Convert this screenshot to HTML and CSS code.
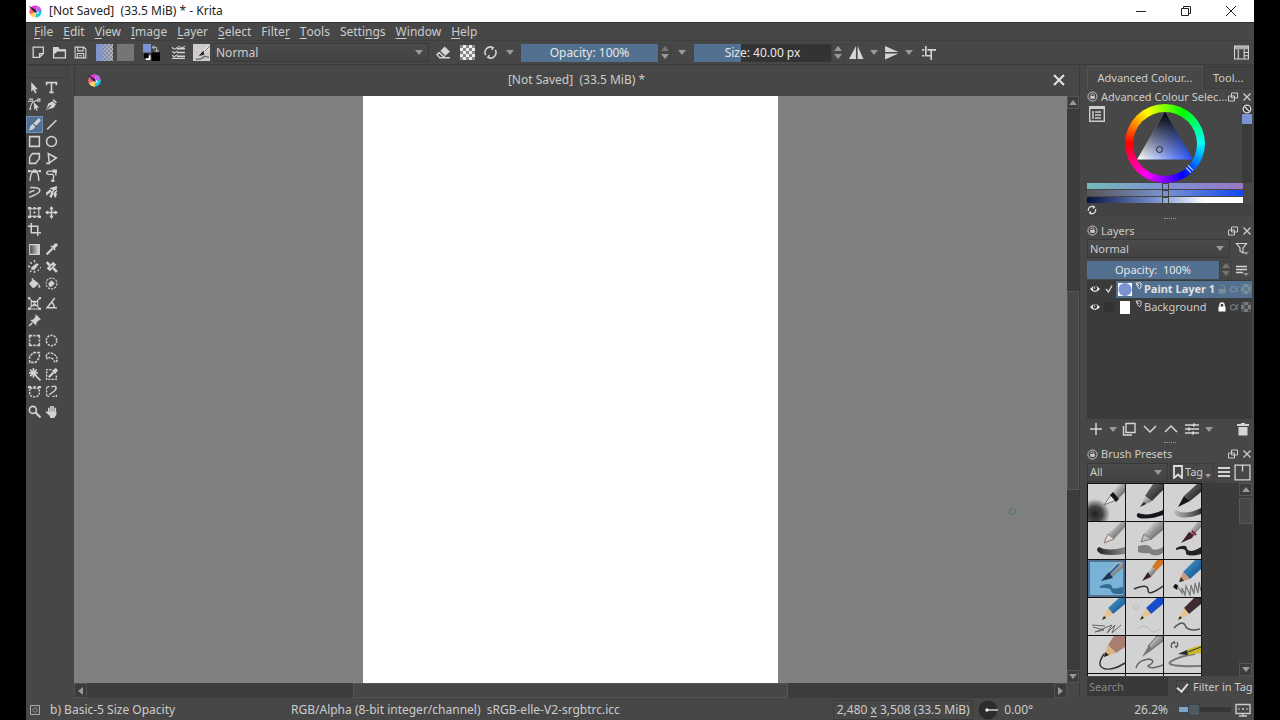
FILE: index.html
```html
<!DOCTYPE html>
<html lang="en">
<head>
<meta charset="utf-8">
<title>[Not Saved] (33.5 MiB) * - Krita</title>
<link rel="stylesheet" href="styles.css">
</head>
<body>
<svg class="defs" aria-hidden="true">
  <defs>
    <linearGradient id="steel" x1="0" y1="0" x2="1" y2="1"><stop offset="0" stop-color="#fff"/><stop offset=".5" stop-color="#999"/><stop offset="1" stop-color="#444"/></linearGradient>
    <linearGradient id="dark" x1="0" y1="0" x2="1" y2="1"><stop offset="0" stop-color="#777"/><stop offset="1" stop-color="#161616"/></linearGradient>
    <linearGradient id="blue" x1="0" y1="0" x2="1" y2="1"><stop offset="0" stop-color="#4aa0d8"/><stop offset="1" stop-color="#0c4a80"/></linearGradient>
    <linearGradient id="fade"><stop offset="0" stop-color="#222"/><stop offset="1" stop-color="#888"/></linearGradient>
    <linearGradient id="fadeout"><stop offset="0" stop-color="#bbb"/><stop offset="1" stop-color="#333"/></linearGradient>
    <linearGradient id="toolgrad"><stop offset="0" stop-color="#444"/><stop offset="1" stop-color="#ddd"/></linearGradient>
    <radialGradient id="puff"><stop offset="0" stop-color="#222"/><stop offset=".5" stop-color="#444"/><stop offset="1" stop-color="#444" stop-opacity="0"/></radialGradient>
  </defs>
  <symbol id="float" viewBox="0 0 10 10"><path d="M3.500 1h6v5h-6zM.5 4h6v5H.5z" fill="#474747" stroke="currentColor"/></symbol>
  <symbol id="close" viewBox="0 0 10 10"><path d="M1.500 1.500l7 7M8.500 1.500l-7 7" stroke="currentColor" stroke-width="1.300"/></symbol>
  <symbol id="lock-ring" viewBox="0 0 12 12"><circle cx="6" cy="6" r="5" fill="none" stroke="currentColor"/><path d="M3.500 5.500h5v3h-5z" fill="currentColor"/><path d="M4.300 5.500V4.700a1.700 1.700 0 0 1 3.400 0v.8" fill="none" stroke="currentColor"/></symbol>
  <symbol id="eye" viewBox="0 0 12 10"><path d="M1 5q5-6 10 0q-5 6-10 0z" fill="#eee"/><circle cx="6" cy="4.500" r="2.200" fill="#333"/><circle cx="5.500" cy="4" r=".8" fill="#eee"/></symbol>
  <symbol id="check" viewBox="0 0 10 10"><path d="M2 5l2.500 3L8 1.500" fill="none" stroke="currentColor" stroke-width="1.500"/></symbol>
  <symbol id="flag" viewBox="0 0 8 8"><path d="M1 1h5v4L4.500 7L2.500 4.500zM1 1l3 3" fill="none" stroke="currentColor"/></symbol>
  <symbol id="padlock" viewBox="0 0 10 10"><path d="M1.500 4.500h7v5h-7z" fill="currentColor"/><path d="M3 5V3a2 2 0 0 1 4 0v2" fill="none" stroke="currentColor" stroke-width="1.400"/></symbol>
  <symbol id="padlock-open" viewBox="0 0 10 10"><path d="M1.500 5h7v4.500h-7z" fill="currentColor"/><path d="M7.500 5V3a1.500 1.500 0 0 0-3-.5" fill="none" stroke="currentColor"/></symbol>
  <symbol id="alpha" viewBox="0 0 10 10"><path d="M9 2Q7 8 4 8Q1.500 8 1.500 5.500T4 2.500Q7 2.500 8.500 8" fill="none" stroke="currentColor" stroke-width="1.200"/></symbol>
  <symbol id="checker" viewBox="0 0 10 10"><path d="M0 0h10v10H0z" fill="currentColor" opacity=".35"/><path d="M0 3h3v4H0zM7 3h3v4H7zM3 0h4v3H3zM3 7h4v3H3z" fill="currentColor"/></symbol>
  <symbol id="logo" viewBox="0 0 14 14"><circle cx="7.500" cy="7.500" r="6" fill="#f4b8e8"/><path d="M2 5A6 6 0 0 1 9 1.700L8 7z" fill="#f52fd8"/><path d="M9 1.700A6 6 0 0 1 13.500 7L8 8z" fill="#bb65ef"/><path d="M13.500 7A6 6 0 0 1 8 13.500L8 7z" fill="#14cbe9"/><path d="M8 13.500A6 6 0 0 1 2 10L8 7z" fill="#ffd25c"/><path d="M2 10A6 6 0 0 1 2 5L8 8z" fill="#ff5b72"/><circle cx="9" cy="8.500" r="1.600" fill="#d8e4fa"/><path d="M.5 1.500l7.500 4.500l1 3l-3.500-1.500z" fill="#29243c"/></symbol>
</svg>

<div class="app">
  <header class="titlebar">
    <svg class="logo"><use href="#logo"/></svg>
    <h1 class="title">[Not Saved]&nbsp; (33.5 MiB) * - Krita</h1>
    <button class="win" aria-label="Minimise"><svg viewBox="0 0 12 12"><path d="M1 6.500h10" stroke="#222"/></svg></button>
    <button class="win" aria-label="Restore"><svg viewBox="0 0 12 12"><path d="M1.500 3.500h7v7h-7zM3.500 3V1.500h7v7H9" fill="none" stroke="#222"/></svg></button>
    <button class="win" aria-label="Close"><svg viewBox="0 0 12 12"><path d="M1 1l10 10M11 1L1 11" stroke="#222"/></svg></button>
  </header>

  <nav class="menubar">
    <button><u>F</u>ile</button><button><u>E</u>dit</button><button><u>V</u>iew</button><button><u>I</u>mage</button><button><u>L</u>ayer</button><button><u>S</u>elect</button><button>Filte<u>r</u></button><button><u>T</u>ools</button><button>Setti<u>n</u>gs</button><button><u>W</u>indow</button><button><u>H</u>elp</button>
  </nav>

  <div class="toolbar">
    <button class="tb" aria-label="New"><svg viewBox="0 0 14 14"><path d="M2 2h9.500v6L8 11.500H2zM11 8H8v3" fill="none" stroke="currentColor" stroke-width="1.200"/></svg></button>
    <button class="tb" aria-label="Open"><svg viewBox="0 0 14 14"><path d="M1.500 12V2.500h4l1 2h6V12z" fill="none" stroke="currentColor" stroke-width="1.200"/><path d="M1 2h5l1 2.500h6V6H5L3 8H1z" fill="currentColor"/></svg></button>
    <button class="tb" aria-label="Save"><svg viewBox="0 0 14 14"><path d="M2 2h8l2 2v8H2zM4.500 2v3.500h5V2M4 12V8h6v4M5.500 10h3" fill="none" stroke="currentColor"/></svg></button>
    <button class="tb space-3" aria-label="Gradient"><span class="swatch swatch-gradient"></span></button>
    <button class="tb" aria-label="Pattern"><span class="swatch swatch-pattern"></span></button>
    <button class="tb space-5" aria-label="Foreground and background colours"><svg class="large" viewBox="0 0 18 18"><path d="M9 9h9v9H9z" fill="#000"/><path d="M0 0h8.500v9H0z" fill="#7b93d2"/><path d="M3 12h5v5H3z" fill="#fff"/><path d="M1 10h5v5H1z" fill="#000"/><path d="M10 3.500h4.500V8M12 1.500L10 3.500L12 5.500M12.500 6.500l2 2l2-2" fill="none" stroke="#ccc"/></svg></button>
    <button class="tb space-6" aria-label="Edit brush settings"><svg viewBox="0 0 14 14"><path d="M5.500 3.500H13M5.500 7H13M5.500 10.500H13M1 12.500h12" stroke="currentColor" stroke-width="1.300"/><path d="M1 2q2 3 4 1q2-2 4-1q2 1 4-1M1 6l2 1.500L6 5.500M1 9.500l2 1.500L6 9" fill="none" stroke="currentColor"/></svg></button>
    <button class="tb space-2" aria-label="Choose brush preset"><svg class="large" viewBox="0 0 18 18"><path d="M0 0h18v18H0z" fill="#cfcbca"/><path d="M17 1L9 9l2 1l7-6z" fill="#efefef"/><path d="M18 2l-6 6" stroke="#555"/><path d="M11 7L6 13l6-2z" fill="#222"/><path d="M3 16q6 1 9-3l5 1" fill="none" stroke="#777" stroke-width="1.500"/></svg></button>
    <span class="combo blend"><select aria-label="Blending mode"><option>Normal</option></select></span>
    <button class="tb space-4" aria-label="Eraser"><svg viewBox="0 0 14 14"><path d="M8 1.500l5 4.500l-4 4L4 5.500z" fill="currentColor"/><path d="M3 7L1 9l2.500 3H13M3 7l4 4l1-1" fill="none" stroke="currentColor" stroke-width="1.400"/></svg></button>
    <button class="tb space-3" aria-label="Preserve alpha"><svg viewBox="0 0 15 15"><path d="M0 0h15v15H0z" fill="#888"/><path d="M0 3h3v3H0zM0 9h3v3H0zM3 0h3v3H3zM9 0h3v3H9zM3 6h3v3H3zM6 3h3v3H6zM9 6h3v3H9zM6 9h3v3H6zM3 12h3v3H3zM9 12h3v3H9zM12 3h3v3h-3zM12 9h3v3h-3z" fill="#eee"/></svg></button>
    <button class="tb space-2" aria-label="Reload preset"><svg viewBox="0 0 14 14"><path d="M2.500 9.500A5.200 5.200 0 0 1 9 2.200M11.500 4.500A5.200 5.200 0 0 1 5 11.800M6.500 12.500L4.500 11.500L6 9.500M7.500 1.500l2 1L8 4.500" fill="none" stroke="currentColor" stroke-width="1.400"/></svg></button>
    <button class="drop space-2" aria-label="More brush options"></button>
    <span class="spin space-5"><input class="fill-all" aria-label="Opacity" value="Opacity: 100%"><span class="steps"><i class="up dim"></i><i class="down"></i></span></span>
    <button class="drop space-4" aria-label="Show size slider"></button>
    <span class="spin space-6"><input class="fill-third" aria-label="Size" value="Size: 40.00 px"><span class="steps"><i class="up"></i><i class="down"></i></span></span>
    <button class="tb space-2" aria-label="Horizontal mirror"><svg viewBox="0 0 14 14"><path d="M6.500 1v12H0zM8 1l5.500 12H8z" fill="currentColor"/></svg></button>
    <button class="drop" aria-label="Horizontal mirror options"></button>
    <button class="tb space-1" aria-label="Vertical mirror"><svg viewBox="0 0 14 14"><path d="M1 6.500V1l12.500 5.500zM1 8v5.500L13.500 8z" fill="currentColor"/></svg></button>
    <button class="drop" aria-label="Vertical mirror options"></button>
    <button class="tb space-3" aria-label="Wrap around mode"><svg viewBox="0 0 14 14"><path d="M4.500 1v9H10M1 10h2M1 4.500h2M6 4.500h8M9.500 4.500V14" fill="none" stroke="currentColor" stroke-width="1.500"/></svg></button>
    <button class="tb push" aria-label="Choose workspace"><svg viewBox="0 0 14 14"><path d="M.5 1h13v12H.5zM4 4v9M9.500 4v9M9.500 7h4M9.500 10h4" fill="none" stroke="currentColor"/><path d="M0 1h14v3H0z" fill="currentColor" opacity=".7"/></svg></button>
  </div>

  <main class="workspace">
    <aside class="toolbox" aria-label="Toolbox">
      <div class="grip"></div>
      <div class="tools">
        <button aria-label="Select shapes"><svg viewBox="0 0 12 12"><path class="solid" d="M3 1v9l2-2l1.500 3.500l1.500-.7L6.500 7.500H9z"/></svg></button>
        <button aria-label="Text"><svg viewBox="0 0 12 12"><path d="M1.500 4V1.500h9V4M6 1.500v9M4 10.500h4" stroke-width="1.500"/></svg></button>
        <button aria-label="Edit shapes"><svg viewBox="0 0 12 12"><path d="M2 11Q2 3 9 2M0 3h4v-2H1M9 1h2v2H9zM1 10h2"/><path class="solid" d="M5.500 4v7L7 9.500L8 12l1-1l-1-2h2.500z"/></svg></button>
        <button aria-label="Calligraphy"><svg viewBox="0 0 12 12"><path class="solid" d="M1 11L3 5l4-2l3 3l-2 3zM8 1l3 3l-1 1l-3-3z"/><path class="hole" d="M2 10l3.500-3.500"/></svg></button>
      </div>
      <div class="tools">
        <button class="active" aria-label="Freehand brush"><svg viewBox="0 0 12 12"><path class="solid" d="M10 0l2 2l-4 5l-3-2zM4.500 5.500l2 2Q6 11 0 11.500Q2 10 2 7.500z"/></svg></button>
        <button aria-label="Line"><svg viewBox="0 0 12 12"><path d="M2 10.500L10.500 2" stroke-width="1.400"/></svg></button>
        <button aria-label="Rectangle"><svg viewBox="0 0 12 12"><path d="M1.500 1.500h9v9h-9z" stroke-width="1.400"/></svg></button>
        <button aria-label="Ellipse"><svg viewBox="0 0 12 12"><circle cx="6" cy="6" r="4.600" stroke-width="1.400"/></svg></button>
        <button aria-label="Polygon"><svg viewBox="0 0 12 12"><path d="M4 1.500h6.500V6L7 10.500H1.500V5z" stroke-width="1.400"/></svg></button>
        <button aria-label="Polyline"><svg viewBox="0 0 12 12"><path d="M1 10.500h3L3 1.500l7.500 4L4 10" stroke-width="1.400"/></svg></button>
        <button aria-label="Bezier curve"><svg viewBox="0 0 12 12"><path d="M1 2h10M2 11Q2 4 5 2h2q3 2 3 9" stroke-width="1.300"/><path class="solid" d="M4.500.5h3v3h-3zM0 1h2v2H0zM10 1h2v2h-2z"/></svg></button>
        <button aria-label="Freehand path"><svg viewBox="0 0 12 12"><path d="M8 2L3 2Q0 4 3 5h4q2 1 0 6M6 11h3M10 3v3" stroke-width="1.300"/><path class="solid" d="M7 .5h4v3H7zM6 10h2v2H6z"/></svg></button>
        <button aria-label="Dynamic brush"><svg viewBox="0 0 12 12"><path d="M2 1.500Q10 1 11 4Q11 7 1 10.500M1 6l5-2" stroke-width="1.400"/></svg></button>
        <button aria-label="Multibrush"><svg viewBox="0 0 12 12"><path d="M10 2L6 6M11 4L8 8" stroke-width="1.400"/><path class="solid" d="M4 2L11 0v3L8 4zM6 5l2 1l-2 5l-2-1zM1 6l4-3l1 2l-5 4zM9 5l2 2l-1 4l-2-2z"/></svg></button>
      </div>
      <div class="tools">
        <button aria-label="Transform"><svg viewBox="0 0 12 12"><path d="M2 2.500h8v7H2zM6 5v2M5 6h2"/><path class="solid" d="M0 1h3v2H0zM9 1h3v2H9zM0 9h3v2H0zM9 9h3v2H9zM5 1h2v2H5zM5 9h2v2H5z"/></svg></button>
        <button aria-label="Move"><svg viewBox="0 0 12 12"><path d="M6 1v10M1 6h10" stroke-width="1.400"/><path class="solid" d="M6 0l2 3H4zM6 12l2-3H4zM0 6l3-2v4zM12 6L9 4v4z"/></svg></button>
        <button aria-label="Crop"><svg viewBox="0 0 12 12"><path d="M3 0v9h9M0 3h9v9" stroke-width="1.400"/></svg></button>
      </div>
      <div class="tools">
        <button aria-label="Gradient"><svg viewBox="0 0 12 12"><path class="ramp" d="M1.500 1.500h9v9h-9z"/></svg></button>
        <button aria-label="Colour sampler"><svg viewBox="0 0 12 12"><path d="M1.500 10.500L7 5" stroke-width="2"/><path class="solid" d="M6 2l4 4l-1 1l-4-4zM7 3l2-2.500h2L12 2L9 5z"/></svg></button>
        <button aria-label="Colourize mask"><svg viewBox="0 0 12 12"><path class="solid" d="M8 3l2 1l-4 5H3V7z"/><path d="M6 0v2M2 2l1.500 1.500M0 6h2M11 7h1M2 11l1-1M6 10v2M9 9l1 1" stroke-width="1.300"/></svg></button>
        <button aria-label="Smart patch"><svg viewBox="0 0 12 12"><path d="M3 9l6-6" stroke-width="4"/><path d="M1.500 2l3 3M7.500 7.500l3.500 3.500" stroke-width="2.500"/><path class="hole" d="M5 7l2-2"/></svg></button>
        <button aria-label="Fill"><svg viewBox="0 0 12 12"><path class="solid" d="M1 6l4-4l5 4l-4 4H4zM10 6l1.500 3a1 1 0 0 1-2 0z"/><path d="M4 1v5"/></svg></button>
        <button aria-label="Enclose and fill"><svg viewBox="0 0 12 12"><circle cx="6" cy="6" r="5" stroke-dasharray="2 1"/><path class="solid" d="M3 6l3-3l3 3l-3 3H4z"/></svg></button>
      </div>
      <div class="tools">
        <button aria-label="Assistant"><svg viewBox="0 0 12 12"><path d="M1 1l10 10M11 1L1 11M1 11h10M3 4h6v4H3z"/><path class="solid" d="M0 0h2v2H0zM10 0h2v2h-2zM0 10h2v2H0zM10 10h2v2h-2z"/></svg></button>
        <button aria-label="Measure"><svg viewBox="0 0 12 12"><path d="M9 1L2 10h9M6 5q3 2 2 5" stroke-width="1.400"/></svg></button>
        <button aria-label="Reference images"><svg viewBox="0 0 12 12"><path class="solid" d="M7 0l5 5l-1.500.5l-2.500 2l-.5 3L2 5.500L5 5l2-3z"/><path d="M4 8l-3 3" stroke-width="1.400"/></svg></button>
      </div>
      <div class="tools">
        <button aria-label="Rectangular selection"><svg viewBox="0 0 12 12"><path d="M1.500 4V1.500H4M5 1.500h2M8 1.500h2.500V4M10.500 5v2M10.500 8v2.500H8M7 10.500H5M4 10.500H1.500V8M1.500 7V5" stroke-width="1.400"/></svg></button>
        <button aria-label="Elliptical selection"><svg viewBox="0 0 12 12"><circle cx="6" cy="6" r="4.800" stroke-width="1.400" stroke-dasharray="2 1"/></svg></button>
        <button aria-label="Polygonal selection"><svg viewBox="0 0 12 12"><path d="M5 1.500h5.500V6L7 10.500H1.500V5z" stroke-width="1.400" stroke-dasharray="2.500 1"/></svg></button>
        <button aria-label="Freehand selection"><svg viewBox="0 0 12 12"><path d="M1 5Q2 1 6 2Q12 4 11 9Q9 12 8 8Q5 5 2 7z" stroke-width="1.400" stroke-dasharray="2 1"/></svg></button>
        <button aria-label="Contiguous selection"><svg viewBox="0 0 12 12"><path d="M5 0v9M1 4.500h8M2 1.500l6 6M8 1.500l-6 6M6 6l5.500 5.500" stroke-width="1.500"/></svg></button>
        <button aria-label="Similar colour selection"><svg viewBox="0 0 12 12"><path d="M6 1.500H1.500v9h9V6" stroke-width="1.300" stroke-dasharray="2 1"/><path d="M3.500 8.500L8 4" stroke-width="2"/><path class="solid" d="M6.500 2.500l3 3L12 2L10 0z"/></svg></button>
        <button aria-label="Bezier selection"><svg viewBox="0 0 12 12"><path d="M2 3h8q2 8-4 8T2 3" stroke-width="1.300" stroke-dasharray="2 1"/><path class="solid" d="M0 1h3v2H0zM9 1h3v2H9zM5 1h2v2H5z"/></svg></button>
        <button aria-label="Magnetic selection"><svg viewBox="0 0 12 12"><path d="M4 1.500H1.500v9h3M7 10.500h3.500V8" stroke-width="1.300" stroke-dasharray="2 1"/><path d="M4 9l4-3q3-2 2-4t-4 0" stroke-width="1.300"/></svg></button>
      </div>
      <div class="tools">
        <button aria-label="Zoom"><svg viewBox="0 0 12 12"><circle cx="4.500" cy="4.500" r="3.200" stroke-width="1.500"/><path d="M7 7l4.500 4.500" stroke-width="2"/></svg></button>
        <button aria-label="Pan"><svg viewBox="0 0 12 12"><path d="M3.500 2.500V8M5.500 1v7M7.500 1v7M9.500 2.500V8M1 6l3 3" stroke-width="1.500"/><path class="solid" d="M3 6h7.500v3L8.500 12H5z"/></svg></button>
      </div>
    </aside>

    <section class="document">
      <header class="doc-title">
        <svg class="logo"><use href="#logo"/></svg>
        <h2>[Not Saved]&nbsp; (33.5 MiB) *</h2>
        <button aria-label="Close document"><svg viewBox="0 0 14 14"><path d="M2 2l10 10M12 2L2 12" stroke="#e4e4e4" stroke-width="2"/></svg></button>
      </header>
      <div class="view">
        <div class="canvas"><div class="sheet"></div><span class="brush-cursor"></span></div>
        <div class="vbar"><button aria-label="Scroll up"><i class="up"></i></button><span class="track"><span class="thumb"></span></span><button aria-label="Scroll down"><i class="down"></i></button></div>
        <div class="hbar"><button aria-label="Scroll left"><i class="left"></i></button><span class="track"><span class="thumb"></span></span><button aria-label="Scroll right"><i class="right"></i></button></div>
      </div>
    </section>

    <aside class="docks">
      <div class="tabs"><button class="selected">Advanced Colour...</button><button>Tool...</button></div>

      <section class="dock">
        <header class="dock-title"><svg class="ring"><use href="#lock-ring"/></svg><h3>Advanced Colour Selec...</h3><button aria-label="Float"><svg><use href="#float"/></svg></button><button aria-label="Close"><svg><use href="#close"/></svg></button></header>
        <div class="selector">
          <button class="config" aria-label="Selector settings"><svg viewBox="0 0 16 16"><path d="M.7 .7h14.600v14.600H.7z" fill="none" stroke="#ccc" stroke-width="1.400"/><path d="M1 2h14" stroke="#ccc" stroke-width="2"/><path d="M4 5v8M6 6h6M6 9h6M6 12h6" stroke="#ccc" stroke-width="1.500"/></svg></button>
          <div class="wheel"><div class="hub"><div class="triangle"></div></div><span class="pick"></span><span class="hue-mark"></span></div>
          <div class="history"><svg viewBox="0 0 10 10"><circle cx="5" cy="5" r="3.800" fill="none" stroke="#ddd" stroke-width="1.300"/><path d="M2.500 2.500l5 5" stroke="#ddd" stroke-width="1.300"/></svg><span></span></div>
        </div>
        <div class="shades"><span class="shade hue"></span><span class="shade saturation"></span><span class="shade value"></span></div>
        <div class="reload"><button aria-label="Reload colours"><svg viewBox="0 0 10 10"><path d="M1.500 6A3.600 3.600 0 0 1 7 2M8.500 4A3.600 3.600 0 0 1 3 8M5.500 .8L7.500 2L6 3.500M4.500 9.200L2.500 8L4 6.500" fill="none" stroke="#ddd" stroke-width="1.200"/></svg></button></div>
      </section>
      <div class="splitter"></div>

      <section class="dock grow-layers">
        <header class="dock-title"><svg class="ring"><use href="#lock-ring"/></svg><h3>Layers</h3><button aria-label="Float"><svg><use href="#float"/></svg></button><button aria-label="Close"><svg><use href="#close"/></svg></button></header>
        <div class="row"><span class="combo"><select aria-label="Layer blending mode"><option>Normal</option></select></span><button class="side" aria-label="Filter layers"><svg viewBox="0 0 14 14"><path d="M1.500 1.500h10L8 6v5L5 9V6z" fill="none" stroke="currentColor" stroke-width="1.200"/><path d="M8 10h6l-3 3z" fill="#999"/></svg></button></div>
        <div class="row"><span class="spin"><input class="fill-all" aria-label="Layer opacity" value="Opacity:  100%"><span class="steps"><i class="up dim"></i><i class="down dim"></i></span></span><button class="side" aria-label="Layer view options"><svg viewBox="0 0 14 14"><path d="M1 3.500h11M1 6.500h11M1 9.500h7" stroke="currentColor" stroke-width="1.500"/><path d="M8 10h6l-3 3z" fill="#999"/></svg></button></div>
        <ul class="layers">
          <li class="current"><svg class="eye"><use href="#eye"/></svg><span class="mark"><svg><use href="#check"/></svg></span><span class="body"><span class="thumbnail disc"></span><svg class="flag"><use href="#flag"/></svg><span class="name">Paint Layer 1</span><svg class="faint"><use href="#padlock-open"/></svg><svg class="faint"><use href="#alpha"/></svg><svg class="faint"><use href="#checker"/></svg></span></li>
          <li><svg class="eye"><use href="#eye"/></svg><span class="mark empty"></span><span class="body"><span class="thumbnail"></span><svg class="flag"><use href="#flag"/></svg><span class="name">Background</span><svg class="bright"><use href="#padlock"/></svg><svg class="faint"><use href="#alpha"/></svg><svg class="faint"><use href="#checker"/></svg></span></li>
        </ul>
        <div class="layer-actions">
          <button aria-label="Add layer"><svg viewBox="0 0 14 14"><path d="M7 1v12M1 7h12" stroke="currentColor" stroke-width="1.500"/></svg></button>
          <button class="drop" aria-label="Add layer options"></button>
          <button aria-label="Duplicate layer"><svg viewBox="0 0 14 14"><path d="M4 1.500h9v9H4z" fill="none" stroke="currentColor" stroke-width="1.400"/><path d="M1.500 4v9H10" fill="none" stroke="currentColor" stroke-width="1.400"/></svg></button>
          <button aria-label="Move layer down"><svg viewBox="0 0 14 14"><path d="M1 4l6 6l6-6" fill="none" stroke="currentColor" stroke-width="1.500"/></svg></button>
          <button aria-label="Move layer up"><svg viewBox="0 0 14 14"><path d="M1 10l6-6l6 6" fill="none" stroke="currentColor" stroke-width="1.500"/></svg></button>
          <button aria-label="Layer properties"><svg viewBox="0 0 14 14"><path d="M0 3h14M0 7h14M0 11h14" stroke="currentColor" stroke-width="1.300"/><path d="M8 1.500h2v3H8zM3 5.500h2v3H3zM7 9.500h2v3H7z" fill="currentColor"/></svg></button>
          <button class="drop" aria-label="Layer properties options"></button>
          <button class="push" aria-label="Delete layer"><svg viewBox="0 0 14 14"><path d="M1 2h4V1h4v1h4v2H1zM2.500 5h9v8.500h-9z" fill="currentColor"/></svg></button>
        </div>
      </section>
      <div class="splitter"></div>

      <section class="dock grow-presets">
        <header class="dock-title"><svg class="ring"><use href="#lock-ring"/></svg><h3>Brush Presets</h3><button aria-label="Float"><svg><use href="#float"/></svg></button><button aria-label="Close"><svg><use href="#close"/></svg></button></header>
        <div class="row"><span class="combo"><select aria-label="Tag filter"><option>All</option></select></span><button class="tag"><svg viewBox="0 0 10 14"><path d="M1 1h8v12L5 9.500L1 13z" fill="none" stroke="#ddd" stroke-width="1.800"/></svg>Tag<i class="down"></i></button><button class="side" aria-label="Display settings"><svg viewBox="0 0 14 14"><path d="M1 3h12M1 7h12M1 11h12" stroke="currentColor" stroke-width="2"/></svg></button><button class="side" aria-label="Storage resources"><svg class="large" viewBox="0 0 16 16"><path d="M1 1h14v14H1zM8 1v6" fill="none" stroke="currentColor" stroke-width="1.200"/></svg></button></div>
        <div class="preset-area">
          <div class="presets">
            <button aria-label="Airbrush Soft"><svg viewBox="0 0 37 37"><circle cx="7" cy="30" r="15" fill="url(#puff)"/><path d="M37 0h-6L24 10l5 6l8-8z" fill="url(#steel)"/><path d="M23 11L16 21l12-5z" fill="#e8e8e8" stroke="#777"/><path d="M25 8l6 7l-3 3l-6-7z" fill="#151515"/></svg></button>
            <button aria-label="Basic-1"><svg viewBox="0 0 37 37"><path d="M12 29q10 4 25-3v5q-14 5-24 3q-4-2-1-5z" fill="#15151b"/><path d="M37 0h-10L19 12l7 5L37 6z" fill="url(#dark)"/><path d="M19 12L14 23l12-6z" fill="url(#steel)"/><path d="M14 23l4-5l2 2z" fill="#222"/></svg></button>
            <button aria-label="Basic-2"><svg viewBox="0 0 37 37"><path d="M12 26q9 6 25-2v6q-16 6-24 2q-5-4-1-6z" fill="url(#fadeout)"/><path d="M33 0L20 12l6 5L37 8V0z" fill="url(#dark)"/><path d="M20 12L14 23l12-6z" fill="#161616"/></svg></button>
            <button aria-label="Basic-3"><svg viewBox="0 0 37 37"><path d="M11 25q9 5 26 0v7q-15 2-24 0q-7-4-2-7z" fill="url(#fade)"/><path d="M33 0L20 12l6 5L37 5V0z" fill="url(#steel)"/><path d="M20 12l-4 9l10-4z" fill="#e7dcd5" stroke="#877"/></svg></button>
            <button aria-label="Basic-4"><svg viewBox="0 0 37 37"><path d="M12 24q12-3 14 3q5 2 11-2v6q-8 5-14 0q-5 1-11-1z" fill="#808080"/><path d="M37 0h-9L18 12l7 6L37 8z" fill="url(#steel)"/><path d="M18 12l-3 8l10-3z" fill="#bbb" stroke="#777"/></svg></button>
            <button aria-label="Ink-1"><svg viewBox="0 0 37 37"><path d="M12 26q11-5 11 1q3 5 14-2v7q-11 3-15 0q1-7-10-4z" fill="#222"/><path d="M37 0h-4L23 13l3 4L37 5z" fill="url(#steel)"/><path d="M25 10L17 21l11-5l2-3z" fill="#402028"/><path d="M28 9l4 4" stroke="#802030" stroke-width="2"/></svg></button>
            <button class="chosen" aria-label="Basic-5 Size Opacity"><svg viewBox="0 0 37 37"><path d="M0 0h37v37H0z" fill="#78b2d7"/><path d="M12 26q9-4 12 0q-2 5 13 0v7q-14 3-14-3q-3-3-11-2z" fill="#326a92"/><path d="M36 2h-7L18 14l5 4L36 7z" fill="url(#steel)"/><path d="M31 4L20 15" stroke="#1d6dba" stroke-width="2"/><path d="M21 12l-8 9l12-3z" fill="#183654"/></svg></button>
            <button aria-label="Bristles-1"><svg viewBox="0 0 37 37"><path d="M8 29q14-6 14 1q0 7 15-4" fill="none" stroke="#333" stroke-width="1.500"/><path d="M37 0h-6L26 7l4 4L37 4z" fill="#d07626"/><path d="M26 7l-5 6l4 4l5-6z" fill="url(#steel)"/><path d="M22 12l-6 9l9-4z" fill="#3b2220"/></svg></button>
            <button aria-label="Pencil-1"><svg viewBox="0 0 37 37"><path d="M14 27l4 6l0-5l3 7l1-9l4 9l1-10l3 9l1-11l3 10l1-11l2 9" fill="none" stroke="#777" stroke-width="1.200"/><path d="M37 0H31L19 12l7 7L37 9z" fill="url(#blue)"/><path d="M19 12L15 22l11-3z" fill="#c79b7b"/><path d="M15 22l2-5l3 4z" fill="#333"/><path d="M11 24l3 1l-1 5l-4-3z" fill="#111"/></svg></button>
            <button aria-label="Pencil-2"><svg viewBox="0 0 37 37"><path d="M4 27l13 1M5 29l11 3l-9 2l17-7l-5 8l8-8l-3 8l9-8" fill="none" stroke="#666"/><path d="M37 0h-6L20 10l5 6L37 6z" fill="url(#blue)"/><path d="M20 10l-6 12l11-6z" fill="#e5c38e"/><path d="M14 22l2-4l2 2z" fill="#222"/></svg></button>
            <button aria-label="Pencil-3"><svg viewBox="0 0 37 37"><circle cx="10" cy="9" r="2.500" fill="none" stroke="#bbb"/><path d="M11 31q8-6 12 0t11 0" fill="none" stroke="#bbb"/><path d="M37 0h-6L20 10l5 6L37 6z" fill="#174dcc"/><path d="M20 10l-6 12l11-6z" fill="#e5c38e"/><path d="M14 22l2-4l2 2z" fill="#222"/></svg></button>
            <button aria-label="Pencil-4"><svg viewBox="0 0 37 37"><path d="M10 30q8-8 11-3q2 7 15 4" fill="none" stroke="#555" stroke-width="1.500"/><path d="M37 0h-7L20 10l5 6L37 6z" fill="#3e2b30"/><path d="M20 10l-6 12l11-6z" fill="#e5c38e"/><path d="M14 22l2-4l2 2z" fill="#222"/></svg></button>
            <button aria-label="Charcoal"><svg viewBox="0 0 37 37"><path d="M16 18q-9 13 2 15q8 1 19-6" fill="none" stroke="#333" stroke-width="1.500"/><path d="M37 0h-11L20 9l8 8L37 11z" fill="#a87e71"/><path d="M20 9l-4 12l12-4z" fill="#d9b183"/><path d="M16 21l1-5l4 3z" fill="#222"/></svg></button>
            <button aria-label="Ink-2"><svg viewBox="0 0 37 37"><path d="M10 32q2-8 13-9q8 2-1 7q3 4 15-1" fill="none" stroke="#666" stroke-width="1.500"/><path d="M37 0h-6L22 10l3 4L37 5z" fill="url(#steel)" stroke="#666"/><path d="M23 9l-7 12l10-7z" fill="#777"/></svg></button>
            <button aria-label="Sketch"><svg viewBox="0 0 37 37"><path d="M31 18Q15 20 6 26q-4 5 31 4" fill="none" stroke="#777" stroke-width="2"/><path d="M37 9L22 14l2 5l13-2z" fill="#c8b72a"/><path d="M37 11l-13 5" stroke="#333"/><path d="M23 14l-9 4l10 1z" fill="#272727"/><path d="M7 8l3-2M8 12q-2-3 1-5M10 5l1 3M13 6q2 3-1 5M13 12l-2-2" fill="none" stroke="#555" stroke-width="1.300"/></svg></button>
            <button aria-label="Marker-1"></button><button aria-label="Marker-2"></button><button aria-label="Marker-3"></button>
          </div>
          <div class="vbar"><button aria-label="Scroll up"><i class="up"></i></button><span class="track"><span class="thumb"></span></span><button aria-label="Scroll down"><i class="down"></i></button></div>
        </div>
        <div class="search-row"><input type="search" placeholder="Search" aria-label="Search presets"><label><input type="checkbox" checked><span>Filter in Tag</span></label></div>
      </section>
    </aside>
  </main>

  <footer class="status">
    <svg viewBox="0 0 10 10"><path d="M.5 .5h9v9h-9z" fill="none" stroke="#aaa"/><circle cx="5" cy="5" r="2.200" fill="none" stroke="#888"/></svg>
    <span class="preset-name">b) Basic-5 Size Opacity</span>
    <span class="profile">RGB/Alpha (8-bit integer/channel)&nbsp; sRGB-elle-V2-srgbtrc.icc</span>
    <button class="dimensions">2,480 <u>x</u> 3,508 (33.5 MiB)</button>
    <svg class="dial" viewBox="0 0 20 20"><circle cx="10" cy="10" r="9.500" fill="#2c2c2c"/><path d="M9 10h11" stroke="#eee" stroke-width="1.300"/><circle cx="9" cy="10" r="1.700" fill="#eee"/></svg>
    <span class="angle">0.00°</span>
    <label class="zoom"><span>26.2%</span><input type="range" min="0" max="100" value="23"></label>
    <button class="fit" aria-label="Fit to view"><svg viewBox="0 0 16 14"><path d="M1 1.500h14v9H1zM8 10.500V13M4 13h8" fill="none" stroke="currentColor" stroke-width="1.400"/><circle cx="8" cy="6" r="1" fill="currentColor"/><path d="M3 6h2M11 6h2" stroke="currentColor"/></svg></button>
  </footer>
</div>
</body>
</html>
```

FILE: styles.css
```css
* { box-sizing: border-box; }

body {
  margin: 0;
  background: #000;
  color: #ccc;
  font: 12px/16px "Noto Sans", "Open Sans", sans-serif;
}

button, input, select {
  margin: 0;
  padding: 0;
  border: 0;
  border-radius: 0;
  background: none;
  color: inherit;
  font: inherit;
}

button { display: flex; align-items: center; justify-content: center; }
h1, h2, h3 { margin: 0; font: inherit; }
u { text-underline-offset: 2px; }
svg { display: block; flex: none; width: 14px; height: 14px; }
.defs { position: absolute; width: 0; height: 0; }

.app {
  display: grid;
  grid-template-rows: 22px 18px 25px minmax(0, 1fr) 22px;
  height: 100vh;
  margin: 0 26px;
  background: #474747;
}

.up, .down, .left, .right { width: 0; height: 0; border: 4px solid transparent; }
.up { border-bottom: 5px solid #999; border-top: 0; }
.down { border-top: 5px solid #999; border-bottom: 0; }
.left { border-right: 5px solid #999; border-left: 0; }
.right { border-left: 5px solid #999; border-right: 0; }
.dim { opacity: .55; }

/* Title bar and menus */
.titlebar { display: flex; align-items: center; padding: 0 1px 0 2px; background: #fff; color: #222; }
.title { flex: 1; padding-left: 7px; }
.win { width: 45px; height: 22px; }
.win svg { width: 12px; height: 12px; }
.menubar { display: flex; align-items: center; gap: 10px; padding-left: 8px; border-top: 1px solid #333; }

/* Main toolbar */
.toolbar { display: flex; align-items: center; padding: 0 2px; border-top: 1px solid #404040; border-bottom: 1px solid #3a3a3a; }
.tb { width: 21px; height: 21px; flex: none; color: #d5d5d5; }
.tb svg { width: 15px; height: 15px; }
.tb .large, .large { width: 17px; height: 17px; }
.swatch { width: 17px; height: 17px; }
.swatch-gradient { background: linear-gradient(90deg, #7b93d2, #7b93d200), conic-gradient(#888 25%, #bbb 0 50%, #888 0 75%, #bbb 0) 0 0 / 4px 4px; }
.swatch-pattern { background: #757575; }
.space-1 { margin-left: 1px; }
.space-2 { margin-left: 2px; }
.space-3 { margin-left: 3px; }
.space-4 { margin-left: 4px; }
.space-5 { margin-left: 5px; }
.space-6 { margin-left: 6px; }
.push { margin-left: auto; }
.drop { width: 13px; height: 18px; }
.drop::after, .combo::after { content: ""; border: 4px solid transparent; border-top: 5px solid #999; border-bottom: 0; }

.combo { position: relative; display: flex; flex: 1; min-width: 0; height: 19px; border: 1px solid #393939; background: linear-gradient(#4b4b4b, #424242); }
.combo::after { position: absolute; right: 5px; top: 6px; pointer-events: none; }
.combo select { width: 100%; padding-left: 2px; appearance: none; }
.blend { flex: 0 1 216px; margin-left: 1px; }

.spin { display: flex; flex: 0 1 150px; min-width: 0; height: 18px; }
.spin input { flex: 1; width: 0; min-width: 0; text-align: center; color: #e6e6e6; white-space: pre; }
.steps { display: flex; flex: none; flex-direction: column; align-items: center; justify-content: center; gap: 3px; width: 13px; border: 1px solid #404040; }
.fill-all { background: #527191; }
.fill-third { background: linear-gradient(90deg, #527191 34%, #333 34%); }

/* Workspace */
.workspace { display: grid; grid-template-columns: 48px minmax(0, 1fr) 174px; min-height: 0; }
.toolbox { background: #474747; }
.grip { height: 13px; width: 42px; margin-bottom: 1px; border: 1px solid #3d3d3d; border-left: 0; }
.tools { display: grid; grid-template-columns: 17px 17px; grid-auto-rows: 17px; margin-bottom: 3px; color: #d2d2d2; }
.tools button { width: 17px; height: 17px; }
.tools svg { width: 13px; height: 13px; fill: none; stroke: currentColor; }
.tools .solid { fill: currentColor; stroke: none; }
.tools .hole { stroke: #474747; }
.tools .ramp { fill: url(#toolgrad); }
.tools .active { background: #527191; border: 1px solid #6f93b8; }

.document { display: grid; grid-template-rows: 31px minmax(0, 1fr); border-right: 1px solid #3a3a3a; min-height: 0; }
.doc-title { display: flex; align-items: center; padding: 0 13px 2px 12px; border-left: 1px solid #3a3a3a; }
.doc-title h2 { flex: 1; text-align: center; }
.logo { width: 14px; height: 14px; }
.view { display: grid; grid-template-columns: minmax(0, 1fr) 12px; grid-template-rows: minmax(0, 1fr) 15px; min-height: 0; }
.canvas { position: relative; display: grid; grid-template-columns: 289fr 415fr 289fr; background: #808080; }
.sheet { grid-column: 2; background: #fff; }
.brush-cursor { position: absolute; left: 94.2%; top: 70.2%; width: 7px; height: 7px; border: 1px solid #4b7a4b; border-radius: 50%; }

.vbar { display: flex; flex-direction: column; min-height: 0; background: #3c3c3c; }
.vbar button { width: 100%; height: 13px; flex: none; border: 1px solid #555; }
.vbar .track { display: grid; flex: 1; grid-template-rows: 182fr 199fr 180fr; }
.vbar .thumb { grid-row: 2; border: 1px solid #575757; background: #474747; }
.hbar { display: flex; background: #3c3c3c; }
.hbar button { width: 13px; flex: none; border: 1px solid #505050; }
.hbar .track { display: grid; flex: 1; grid-template-columns: 266fr 435fr 266fr; }
.hbar .thumb { grid-column: 2; border: 1px solid #555; background: #474747; }

/* Dockers */
.docks { display: flex; flex-direction: column; min-height: 0; padding: 1px 2px 1px 7px; font-size: 11px; }
.tabs { display: flex; flex: none; height: 23px; }
.tabs button { padding: 0 9px; border: 1px solid #3c3c3c; background: #424242; white-space: nowrap; flex: 1; }
.tabs .selected { flex: 0 0 116px; background: #474747; border-color: #555; border-bottom: 0; }
.dock-title { display: flex; align-items: center; height: 15px; flex: none; }
.dock-title h3 { flex: 1; padding-left: 3px; white-space: nowrap; }
.dock-title button, .dock-title button svg { width: 10px; height: 10px; }
.dock-title button + button { margin-left: 4px; }
.ring { width: 11px; height: 11px; }
.dock { display: flex; flex-direction: column; flex: none; min-height: 0; }
.grow-layers { flex: 217 1 0; }
.grow-presets { flex: 251 1 0; }
.splitter { flex: none; width: 12px; height: 5px; margin: 2px auto 0; border-top: 1px dotted #999; }

.selector { display: grid; grid-template-columns: 38px 1fr 10px; height: 79px; }
.config { width: 18px; height: 18px; margin: 1px; }
.config svg { width: 16px; height: 16px; }
.wheel { position: relative; display: grid; place-items: center; width: 80px; height: 79px; border-radius: 50%; background: conic-gradient(from 270deg, #f00, #ff0, #0f0, #0ff, #00f, #f0f, #f00); }
.hub { width: 64px; height: 64px; padding: 0 4px; border-radius: 50%; background: #474747; }
.triangle { height: 48px; background: linear-gradient(#000, #0000), linear-gradient(90deg, #fff 5%, #1f50ff); clip-path: polygon(50% 0, 100% 100%, 0 100%); }
.pick { position: absolute; left: 31px; top: 42px; width: 7px; height: 7px; border: 1px solid #222; border-radius: 50%; }
.hue-mark { position: absolute; left: 61px; top: 63px; width: 7px; height: 4px; border: solid #dde; border-width: 1px 0; transform: rotate(45deg); }
.history { background: #3b3b3b; }
.history svg { width: 10px; height: 10px; }
.history span { display: block; height: 10px; background: #7b93d2; }
.shades { display: grid; gap: 1px; width: 156px; }
.shade { height: 6px; }
.shade::after { content: ""; display: block; width: 5px; height: 6px; margin: 0 auto; border: 1px solid #444; }
.hue { background: linear-gradient(90deg, #76b9ba, #7b93d2 50%, #9a77c5); }
.saturation { background: linear-gradient(90deg, #555, #7b93d2 50%, #1148f0); }
.value { background: linear-gradient(90deg, #07133f, #7b93d2 45%, #fff 75%); }
.reload { height: 13px; padding: 2px 0 0; background: #424242; }
.reload button, .reload svg { width: 10px; height: 10px; }

.row { display: flex; align-items: center; height: 21px; flex: none; }
.row .combo { margin-right: 2px; }
.row .spin { flex: 1; }
.side { width: 20px; flex: none; color: #d5d5d5; }
.layers { display: flex; flex: 1; flex-direction: column; min-height: 0; margin: 0; padding: 0; list-style: none; background: #3b3b3b; }
.layers li { display: flex; align-items: center; height: 18px; }
.eye { width: 12px; height: 10px; margin-left: 2px; }
.mark { width: 10px; height: 10px; margin: 0 2px 0 3px; }
.mark svg { width: 10px; height: 10px; }
.empty { background: #333; }
.body { display: flex; flex: 1; align-items: center; height: 17px; padding-left: 2px; min-width: 0; }
.current .body { background: #527191; color: #e0e0e0; font-weight: bold; }
.thumbnail { flex: none; width: 10px; height: 13px; margin: 0 2px; background: #fff; }
.disc { width: 14px; margin: 0; background: radial-gradient(circle, #7b93d2 6px, #fff 7px); }
.flag { width: 8px; height: 8px; margin: 0 1px 6px 3px; }
.name { flex: 1; white-space: nowrap; }
.faint, .bright { width: 10px; height: 10px; margin: 0 1px; color: #8f989f; opacity: .7; }
.bright { color: #fff; opacity: 1; }
.layer-actions { display: flex; align-items: center; flex: none; height: 21px; gap: 3px; color: #d5d5d5; }
.layer-actions button { min-width: 18px; }
.layer-actions .drop { min-width: 9px; width: 9px; }

.tag { flex: none; width: 44px; height: 19px; gap: 2px; border: 1px solid #3c3c3c; }
.tag svg { width: 10px; }
.tag .down { margin-top: 8px; border-width: 4px 3px 0; }
.grow-presets .side { width: 19px; }
.preset-area { display: flex; justify-content: space-between; flex: 1; min-height: 0; background: #3b3b3b; }
.presets { display: grid; grid-template-columns: repeat(3, 37px); grid-auto-rows: 37px; gap: 1px; padding: 1px; overflow: hidden; background: #111; }
.presets button { background: #d2d2d2; }
.presets svg { width: 37px; height: 37px; }
.presets .chosen { border: 2px solid #527191; overflow: hidden; }
.preset-area .vbar { width: 13px; }
.preset-area .track { grid-template-rows: 2fr 26fr 139fr; }
.search-row { display: flex; align-items: center; height: 21px; flex: none; }
.search-row > input { width: 81px; height: 19px; padding: 0 2px; background: #383838; outline: none; }
.search-row > input::placeholder { color: #888; }
.search-row label { display: flex; align-items: center; gap: 4px; margin-left: 8px; white-space: nowrap; }
.search-row [type="checkbox"] { appearance: none; display: grid; flex: none; place-items: center; width: 13px; height: 13px; margin: 0; border: 1px solid #3a3a3a; }
.search-row [type="checkbox"]:checked::after { content: ""; width: 5px; height: 9px; border: solid #ddd; border-width: 0 2px 2px 0; transform: rotate(40deg); }

/* Status bar */
.status { display: flex; align-items: center; padding: 1px 3px 0 4px; white-space: nowrap; }
.status > svg { width: 10px; height: 10px; }
.preset-name { width: 241px; padding-left: 10px; }
.profile { flex: 1; padding-left: 10px; }
.dimensions { display: block; width: 140px; height: 20px; border: 1px solid #3b3b3b; }
.status .dial { width: 20px; height: 20px; margin-left: 5px; }
.angle { width: 136px; padding-left: 6px; }
.zoom { display: flex; align-items: center; gap: 11px; }
.zoom input { width: 52px; height: 14px; appearance: none; background: linear-gradient(90deg, #79a5cd 20%, #363636 20%) center / 100% 5px no-repeat; }
.zoom input::-webkit-slider-thumb { appearance: none; width: 12px; height: 12px; border: 1px solid #39424a; background: #4f5961; }
.fit { width: 16px; margin-left: 4px; }
.fit svg { width: 16px; }
```
